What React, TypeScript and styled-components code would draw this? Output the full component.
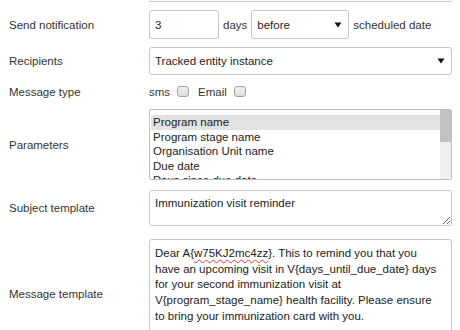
import styled, { createGlobalStyle } from "styled-components";

const GlobalStyle = createGlobalStyle`
  html, body {
    margin: 0;
    padding: 0;
    background: #fff;
  }
  body {
    font-family: "Liberation Sans", Arial, sans-serif;
    font-size: 11.5px;
    color: #333;
  }
`;

const Form = styled.div`
  display: flex;
  flex-direction: column;
  padding: 0 8px;
  width: 444px;
`;

const PrevFieldEdge = styled.div`
  margin-left: 141px;
  height: 1px;
  border: 1px solid #c4c4c4;
  border-top: none;
  border-radius: 0 0 3px 3px;
`;

const Row = styled.div<{ $top: number; $height: number }>`
  display: flex;
  align-items: center;
  margin-top: ${(p) => p.$top}px;
  height: ${(p) => p.$height}px;
`;

const Label = styled.div`
  width: 140px;
  flex: none;
  padding-left: 1px;
  color: #333;
  white-space: nowrap;
`;

const Field = styled.div`
  flex: 1;
  display: flex;
  align-items: center;
  height: 100%;
  min-width: 0;
`;

const TextBox = styled.div<{ $width?: number }>`
  box-sizing: border-box;
  height: 100%;
  width: ${(p) => (p.$width ? `${p.$width}px` : "100%")};
  border: 1px solid #c4c4c4;
  border-radius: 3px;
  padding: 0 5px;
  display: flex;
  align-items: center;
  color: #222;
  background: #fff;
`;

const SelectBox = styled(TextBox)`
  justify-content: space-between;
  padding-right: 6px;
`;

const Arrow = () => (
  <svg width="8" height="6" viewBox="0 0 8 6">
    <path d="M0.5 0.5 L7.5 0.5 L4 5.5 Z" fill="#111" />
  </svg>
);

const Inline = styled.span<{ $gap: number }>`
  margin: 0 ${(p) => p.$gap}px;
  color: #333;
  white-space: nowrap;
`;

const CheckText = styled.span`
  color: #333;
`;

const Check = styled.span<{ $gapAfter?: number }>`
  box-sizing: border-box;
  width: 12px;
  height: 11px;
  margin: 0 ${(p) => p.$gapAfter ?? 0}px 1px 7px;
  border: 1px solid #a3a3a3;
  border-radius: 3px;
  background: linear-gradient(#f1f1f1, #dcdcdc);
`;

const ListBox = styled.div`
  box-sizing: border-box;
  height: 100%;
  width: 100%;
  border: 1px solid #bdbdbd;
  border-radius: 2px;
  display: flex;
  overflow: hidden;
`;

const Options = styled.div`
  flex: 1;
  padding: 5px 0 0 1px;
  overflow: hidden;
`;

const Option = styled.div<{ $selected?: boolean }>`
  height: 14.6px;
  line-height: 14.6px;
  padding-left: 2px;
  color: #222;
  white-space: nowrap;
  background: ${(p) => (p.$selected ? "#e3e3e3" : "transparent")};
`;

const ScrollTrack = styled.div`
  width: 11px;
  flex: none;
  background: #f0f0f0;
  display: flex;
  flex-direction: column;
`;

const ScrollThumb = styled.div`
  height: 32px;
  background: #c1c1c1;
`;

const SubjectArea = styled.textarea`
  box-sizing: border-box;
  height: 100%;
  width: 100%;
  margin: 0;
  border: 1px solid #c4c4c4;
  border-radius: 3px;
  padding: 5px 5px;
  font-family: "Liberation Sans", Arial, sans-serif;
  font-size: 11.5px;
  line-height: 15.7px;
  color: #222;
  resize: vertical;
  outline: none;
`;

const MessageArea = styled.div`
  box-sizing: border-box;
  height: 100%;
  width: 100%;
  border: 1px solid #c4c4c4;
  border-radius: 3px;
  padding: 6px 5px;
  line-height: 15.7px;
  color: #222;
  white-space: nowrap;
  align-self: flex-start;
`;

const Misspelled = styled.span`
  text-decoration: underline wavy #e33;
  text-decoration-thickness: 1px;
  text-underline-offset: 2px;
`;

const parameters = [
  "Program name",
  "Program stage name",
  "Organisation Unit name",
  "Due date",
  "Days since due date",
];

export default function App() {
  return (
    <>
      <GlobalStyle />
      <Form>
        <PrevFieldEdge />
        <Row $top={8} $height={29}>
          <Label>Send notification</Label>
          <Field>
            <TextBox $width={70}>3</TextBox>
            <Inline $gap={4}>days</Inline>
            <SelectBox $width={98}>
              before
              <Arrow />
            </SelectBox>
            <Inline $gap={4}>scheduled date</Inline>
          </Field>
        </Row>
        <Row $top={8} $height={28}>
          <Label>Recipients</Label>
          <Field>
            <SelectBox>
              Tracked entity instance
              <Arrow />
            </SelectBox>
          </Field>
        </Row>
        <Row $top={9} $height={16}>
          <Label>Message type</Label>
          <Field>
            <CheckText>sms</CheckText>
            <Check $gapAfter={1} />
            <CheckText style={{ marginLeft: 8 }}>Email</CheckText>
            <Check />
          </Field>
        </Row>
        <Row $top={9} $height={71}>
          <Label>Parameters</Label>
          <Field>
            <ListBox>
              <Options>
                {parameters.map((p, i) => (
                  <Option key={p} $selected={i === 0}>
                    {p}
                  </Option>
                ))}
              </Options>
              <ScrollTrack>
                <ScrollThumb />
              </ScrollTrack>
            </ListBox>
          </Field>
        </Row>
        <Row $top={10} $height={36}>
          <Label>Subject template</Label>
          <Field>
            <SubjectArea readOnly spellCheck={false} defaultValue="Immunization visit reminder" />
          </Field>
        </Row>
        <Row $top={13} $height={110}>
          <Label>Message template</Label>
          <Field>
            <MessageArea>
              Dear A{"{"}
              <Misspelled>w75KJ2mc4zz</Misspelled>
              {"}"}. This to remind you that you
              <br />
              have an upcoming visit in V{"{days_until_due_date}"} days
              <br />
              for your second immunization visit at
              <br />
              V{"{program_stage_name}"} health facility. Please ensure
              <br />
              to bring your immunization card with you.
            </MessageArea>
          </Field>
        </Row>
      </Form>
    </>
  );
}
